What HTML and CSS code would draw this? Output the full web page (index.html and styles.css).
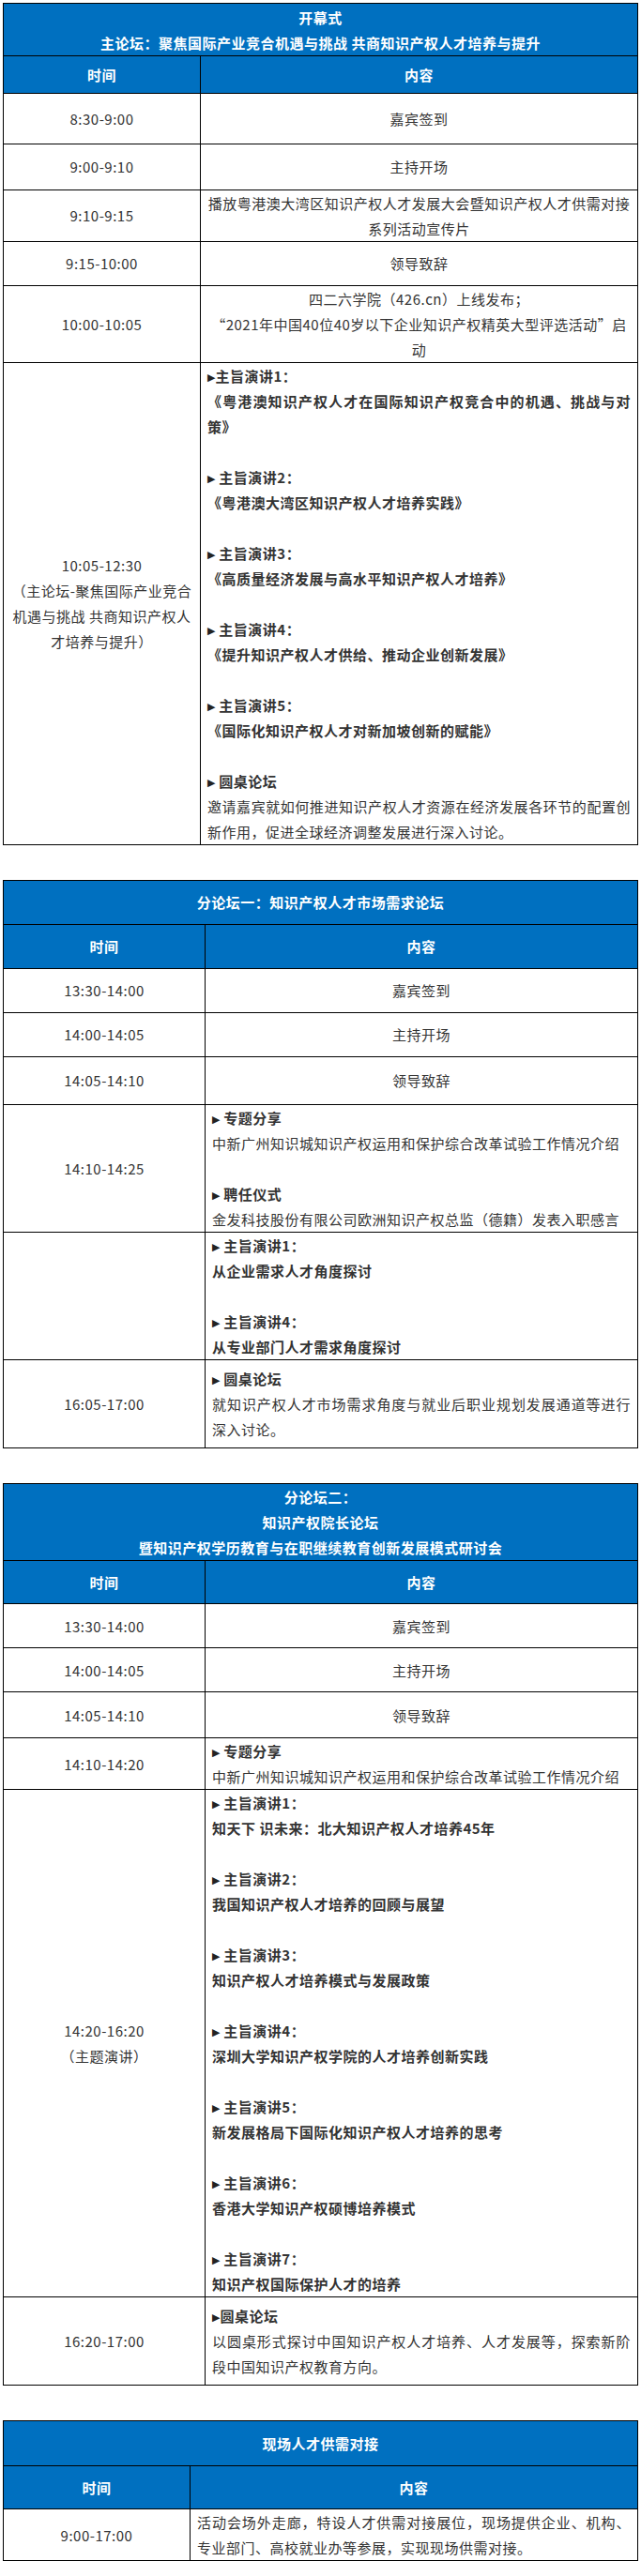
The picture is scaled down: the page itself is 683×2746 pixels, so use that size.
FILE: index.html
```html
<!DOCTYPE html>
<html lang="zh-CN">
<head>
<meta charset="utf-8">
<title>议程</title>
<link rel="stylesheet" href="styles.css">
</head>
<body>
<div class="page">

<table class="sched t1">
  <colgroup><col class="c1"><col></colgroup>
  <tr class="cap cap-multi"><td colspan="2"><p>开幕式</p><p>主论坛：聚焦国际产业竞合机遇与挑战 共商知识产权人才培养与提升</p></td></tr>
  <tr class="head h40"><td>时间</td><td>内容</td></tr>
  <tr class="h54"><td class="time">8:30-9:00</td><td class="mid">嘉宾签到</td></tr>
  <tr class="h49"><td class="time">9:00-9:10</td><td class="mid">主持开场</td></tr>
  <tr class="multi"><td class="time">9:10-9:15</td><td class="mid">播放粤港澳大湾区知识产权人才发展大会暨知识产权人才供需对接系列活动宣传片</td></tr>
  <tr><td class="time">9:15-10:00</td><td class="mid">领导致辞</td></tr>
  <tr class="multi"><td class="time">10:00-10:05</td><td class="mid"><p>四二六学院（426.cn）上线发布；</p><p>“2021年中国40位40岁以下企业知识产权精英大型评选活动”启动</p></td></tr>
  <tr class="multi"><td class="time"><p>10:05-12:30</p><p>（主论坛-聚焦国际产业竞合机遇与挑战 共商知识产权人才培养与提升）</p></td>
    <td class="prog">
      <p class="b"><span class="tri">▶</span>主旨演讲1：</p>
      <p class="b">《粤港澳知识产权人才在国际知识产权竞合中的机遇、挑战与对策》</p>
      <p><br></p>
      <p class="b"><span class="tri">▶</span> 主旨演讲2：</p>
      <p class="b">《粤港澳大湾区知识产权人才培养实践》</p>
      <p><br></p>
      <p class="b"><span class="tri">▶</span> 主旨演讲3：</p>
      <p class="b">《高质量经济发展与高水平知识产权人才培养》</p>
      <p><br></p>
      <p class="b"><span class="tri">▶</span> 主旨演讲4：</p>
      <p class="b">《提升知识产权人才供给、推动企业创新发展》</p>
      <p><br></p>
      <p class="b"><span class="tri">▶</span> 主旨演讲5：</p>
      <p class="b">《国际化知识产权人才对新加坡创新的赋能》</p>
      <p><br></p>
      <p class="b"><span class="tri">▶</span> 圆桌论坛</p>
      <p>邀请嘉宾就如何推进知识产权人才资源在经济发展各环节的配置创新作用，促进全球经济调整发展进行深入讨论。</p>
    </td></tr>
</table>

<table class="sched t2">
  <colgroup><col class="c1"><col></colgroup>
  <tr class="cap"><td colspan="2">分论坛一：知识产权人才市场需求论坛</td></tr>
  <tr class="head"><td>时间</td><td>内容</td></tr>
  <tr><td class="time">13:30-14:00</td><td class="mid">嘉宾签到</td></tr>
  <tr><td class="time">14:00-14:05</td><td class="mid">主持开场</td></tr>
  <tr class="h51"><td class="time">14:05-14:10</td><td class="mid">领导致辞</td></tr>
  <tr class="multi"><td class="time">14:10-14:25</td>
    <td class="prog">
      <p class="b"><span class="tri">▶</span> 专题分享</p>
      <p>中新广州知识城知识产权运用和保护综合改革试验工作情况介绍</p>
      <p><br></p>
      <p class="b"><span class="tri">▶</span> 聘任仪式</p>
      <p>金发科技股份有限公司欧洲知识产权总监（德籍）发表入职感言</p>
    </td></tr>
  <tr class="multi"><td class="time"></td>
    <td class="prog">
      <p class="b"><span class="tri">▶</span> 主旨演讲1：</p>
      <p class="b">从企业需求人才角度探讨</p>
      <p><br></p>
      <p class="b"><span class="tri">▶</span> 主旨演讲4：</p>
      <p class="b">从专业部门人才需求角度探讨</p>
    </td></tr>
  <tr class="h94"><td class="time">16:05-17:00</td>
    <td class="prog">
      <p class="b"><span class="tri">▶</span> 圆桌论坛</p>
      <p>就知识产权人才市场需求角度与就业后职业规划发展通道等进行深入讨论。</p>
    </td></tr>
</table>

<table class="sched t3">
  <colgroup><col class="c1"><col></colgroup>
  <tr class="cap cap-multi"><td colspan="2"><p>分论坛二：</p><p>知识产权院长论坛</p><p>暨知识产权学历教育与在职继续教育创新发展模式研讨会</p></td></tr>
  <tr class="head h46"><td>时间</td><td>内容</td></tr>
  <tr><td class="time">13:30-14:00</td><td class="mid">嘉宾签到</td></tr>
  <tr><td class="time">14:00-14:05</td><td class="mid">主持开场</td></tr>
  <tr class="h49"><td class="time">14:05-14:10</td><td class="mid">领导致辞</td></tr>
  <tr class="multi"><td class="time">14:10-14:20</td>
    <td class="prog">
      <p class="b"><span class="tri">▶</span> 专题分享</p>
      <p>中新广州知识城知识产权运用和保护综合改革试验工作情况介绍</p>
    </td></tr>
  <tr class="multi"><td class="time"><p>14:20-16:20</p><p>（主题演讲）</p></td>
    <td class="prog">
      <p class="b"><span class="tri">▶</span> 主旨演讲1：</p>
      <p class="b">知天下 识未来：北大知识产权人才培养45年</p>
      <p><br></p>
      <p class="b"><span class="tri">▶</span> 主旨演讲2：</p>
      <p class="b">我国知识产权人才培养的回顾与展望</p>
      <p><br></p>
      <p class="b"><span class="tri">▶</span> 主旨演讲3：</p>
      <p class="b">知识产权人才培养模式与发展政策</p>
      <p><br></p>
      <p class="b"><span class="tri">▶</span> 主旨演讲4：</p>
      <p class="b">深圳大学知识产权学院的人才培养创新实践</p>
      <p><br></p>
      <p class="b"><span class="tri">▶</span> 主旨演讲5：</p>
      <p class="b">新发展格局下国际化知识产权人才培养的思考</p>
      <p><br></p>
      <p class="b"><span class="tri">▶</span> 主旨演讲6：</p>
      <p class="b">香港大学知识产权硕博培养模式</p>
      <p><br></p>
      <p class="b"><span class="tri">▶</span> 主旨演讲7：</p>
      <p class="b">知识产权国际保护人才的培养</p>
    </td></tr>
  <tr class="h94"><td class="time">16:20-17:00</td>
    <td class="prog">
      <p class="b"><span class="tri">▶</span>圆桌论坛</p>
      <p>以圆桌形式探讨中国知识产权人才培养、人才发展等，探索新阶段中国知识产权教育方向。</p>
    </td></tr>
</table>

<table class="sched t4">
  <colgroup><col class="c1"><col></colgroup>
  <tr class="cap h48"><td colspan="2">现场人才供需对接</td></tr>
  <tr class="head h46"><td>时间</td><td>内容</td></tr>
  <tr class="multi"><td class="time">9:00-17:00</td>
    <td class="prog"><p>活动会场外走廊，特设人才供需对接展位，现场提供企业、机构、专业部门、高校就业办等参展，实现现场供需对接。</p></td></tr>
</table>

</div>
</body>
</html>
```

FILE: styles.css
```css
html, body {
  margin: 0;
  padding: 0;
  background: #ffffff;
}

body {
  font-family: "Noto Sans CJK SC", "Noto Sans", sans-serif;
  font-size: 15px;
  letter-spacing: 0.5px;
  line-height: 27px;
  color: #333333;
}

.page {
  width: 680px;
  padding: 3px 0 18px 3px;
}

.sched {
  width: 677px;
  border-collapse: collapse;
  table-layout: fixed;
  margin-bottom: 37px;
}

.sched:last-child {
  margin-bottom: 0;
}

.t1 .c1 { width: 210px; }
.t2 .c1, .t3 .c1 { width: 215px; }
.t4 .c1 { width: 199px; }

.sched td {
  border: 1px solid #000000;
  padding: 9.5px 7px;
  vertical-align: middle;
}

.sched p {
  margin: 0;
  height: 27px;
  overflow: visible;
}

.sched td > p:only-child,
.time p,
.mid p {
  height: auto;
}

.prog p {
  height: auto;
  line-height: 27px;
}

.cap td,
.head td {
  background: #0070c0;
  color: #ffffff;
  font-weight: bold;
  text-align: center;
}

.cap-multi td {
  padding-top: 0.5px;
  padding-bottom: 0;
}

.cap-multi p {
  height: 27px;
}

.h40 td { padding-top: 6px; padding-bottom: 6px; }
.h46 td { padding-top: 9px; padding-bottom: 9px; }
.h48 td { padding-top: 10px; padding-bottom: 10px; }
.h49 td { padding-top: 10.5px; padding-bottom: 10.5px; }
.h51 td { padding-top: 11.5px; padding-bottom: 11.5px; }
.h54 td { padding-top: 13px; padding-bottom: 13px; }
.h94 td { padding-top: 6px; padding-bottom: 6px; }

.multi td {
  padding-top: 0;
  padding-bottom: 0;
}

.time,
.mid {
  text-align: center;
}

.prog {
  text-align: justify;
}

.b {
  font-weight: bold;
}

.tri {
  font-family: "DejaVu Sans", sans-serif;
  font-size: 11px;
  line-height: 1;
  font-weight: normal;
  letter-spacing: 0;
  color: #222222;
  vertical-align: 1px;
}
```
